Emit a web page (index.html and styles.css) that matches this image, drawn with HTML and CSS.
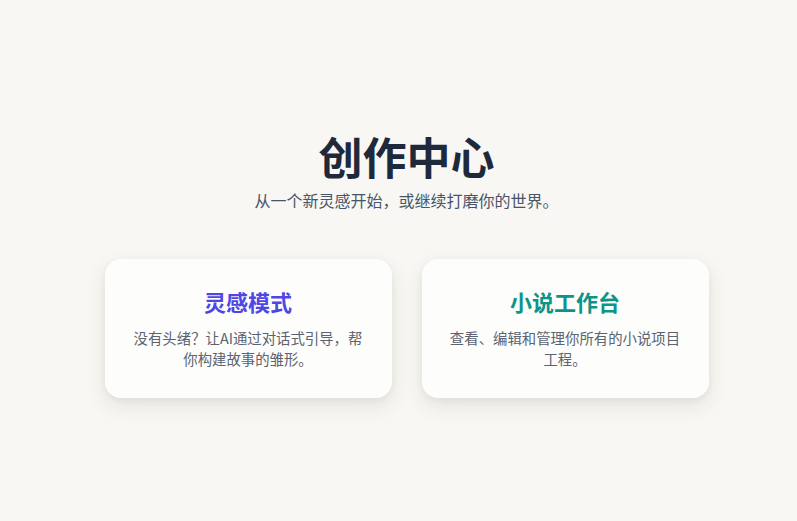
FILE: index.html
```html
<!DOCTYPE html>
<html lang="zh-CN">
<head>
<meta charset="utf-8">
<title>创作中心</title>
<link rel="stylesheet" href="styles.css">
</head>
<body>
<main class="page">
  <header class="hero">
    <h1 class="hero-title">创作中心</h1>
    <p class="hero-sub">从一个新灵感开始，或继续打磨你的世界。</p>
  </header>
  <section class="cards">
    <div class="card">
      <h2 class="card-title card-title-indigo">灵感模式</h2>
      <p class="card-desc">没有头绪？让AI通过对话式引导，帮你构建故事的雏形。</p>
    </div>
    <div class="card">
      <h2 class="card-title card-title-teal">小说工作台</h2>
      <p class="card-desc">查看、编辑和管理你所有的小说项目工程。</p>
    </div>
  </section>
</main>
</body>
</html>
```
FILE: styles.css
```css
html, body {
  margin: 0;
  padding: 0;
  background: #f8f7f3;
}
body {
  font-family: "Noto Sans CJK SC", "Noto Sans", sans-serif;
  color: #1f2937;
}
.page {
  box-sizing: border-box;
  width: 100%;
  min-height: 521px;
  padding: 124px 0 0 16px;
  display: flex;
  flex-direction: column;
  align-items: center;
}
.hero {
  text-align: center;
}
.hero-title {
  margin: 0;
  font-size: 44px;
  line-height: 64px;
  font-weight: 700;
  color: #1e293b;
}
.hero-sub {
  margin: 0;
  font-size: 16px;
  line-height: 24px;
  color: #475569;
}
.cards {
  margin-top: 47px;
  display: flex;
  gap: 30px;
}
.card {
  box-sizing: border-box;
  width: 287px;
  height: 139px;
  padding: 26px 27px;
  background: #fdfdfb;
  border-radius: 16px;
  box-shadow: 0 8px 20px rgba(60, 50, 30, 0.10), 0 2px 6px rgba(60, 50, 30, 0.05);
  text-align: center;
}
.card-title {
  margin: 0;
  font-size: 22px;
  line-height: 33px;
  font-weight: 700;
}
.card-title-indigo { color: #4f46e5; }
.card-title-teal { color: #0d9488; }
.card-desc {
  margin: 10px 0 0;
  font-size: 14.4px;
  line-height: 20.5px;
  color: #5b6270;
}
```
